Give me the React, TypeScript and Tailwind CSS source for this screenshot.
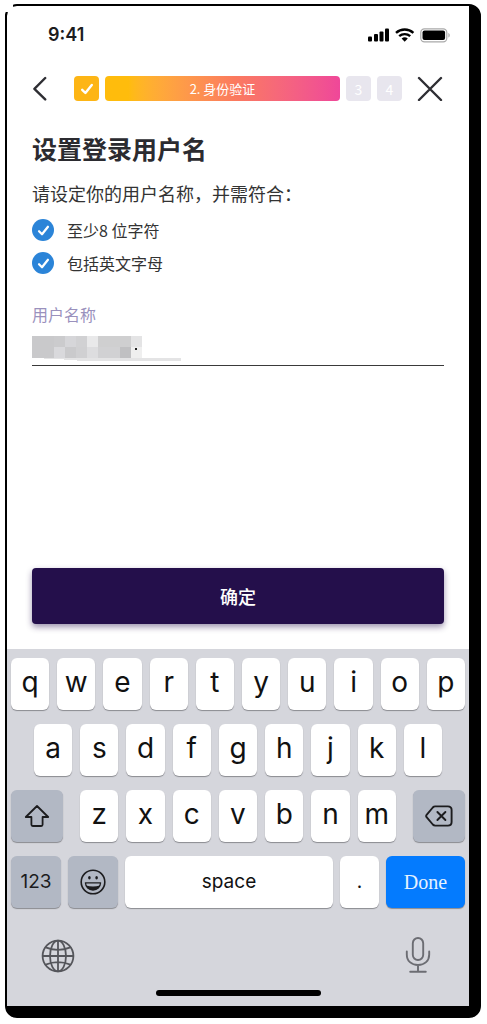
import type { ReactNode } from "react";

const KEY =
  "flex h-[52px] items-center justify-center rounded-md shadow-[0_1px_1px_#8a8b90]";
const LETTER = `${KEY} min-w-0 flex-1 bg-white pb-1 text-[28px] font-normal text-[#111]`;
const GREY = `${KEY} bg-[#b2b8c4] text-[#1c1c1e]`;

function Letters({ keys }: { keys: string }) {
  return (
    <>
      {keys.split("").map((k) => (
        <button key={k} type="button" className={LETTER}>
          {k}
        </button>
      ))}
    </>
  );
}

function Tick({ size }: { size: number }) {
  return (
    <svg width={size} height={size} viewBox="0 0 14 14" fill="none" aria-hidden="true">
      <path
        d="M2.2 7.8 5.4 11 11.8 3"
        stroke="#fff"
        strokeWidth="2.4"
        strokeLinecap="round"
        strokeLinejoin="round"
      />
    </svg>
  );
}

function StatusBar() {
  return (
    <div className="flex h-6 items-center pr-[18px] pl-[41px]">
      <span className="flex-1 text-lg font-semibold text-[#1c1c1e]">9:41</span>
      <svg width="84" height="16" viewBox="0 0 84 16" aria-hidden="true">
        <g fill="#000">
          <rect x="1" y="9.5" width="4" height="5" rx="1" />
          <rect x="7" y="7" width="4" height="7.5" rx="1" />
          <rect x="12.5" y="4.5" width="4" height="10" rx="1" />
          <rect x="18" y="1.5" width="4" height="13" rx="1" />
        </g>
        <g fill="none" stroke="#000" strokeWidth="2.4">
          <path d="M29 5.8a13 13 0 0 1 17.4 0" />
          <path d="M32.2 9.2a8.2 8.2 0 0 1 11 0" />
        </g>
        <path d="M34.6 11.6a4.6 4.6 0 0 1 6.2 0L37.7 14.8Z" fill="#000" />
        <rect x="53.8" y="1.8" width="26" height="13" rx="3.6" fill="none" stroke="#a9a9a9" strokeWidth="1.2" />
        <rect x="55.5" y="3.5" width="22.6" height="9.6" rx="2" fill="#000" />
        <path d="M81.4 6v4.6c1.8-.7 1.8-3.9 0-4.6Z" fill="#a9a9a9" />
      </svg>
    </div>
  );
}

function Step({ children }: { children: ReactNode }) {
  return (
    <li className="flex h-[25px] w-[25px] items-center justify-center rounded bg-[#e8e6ee] text-sm text-white">
      {children}
    </li>
  );
}

function StepBar() {
  return (
    <nav aria-label="步骤" className="mt-[29px] flex h-[25px] items-center gap-1.5">
      <button type="button" aria-label="返回" className="flex h-[25px] w-9 items-center">
        <svg width="16" height="25" viewBox="0 0 16 25" fill="none" aria-hidden="true">
          <path d="M13.2 2 2.4 12.8 13.2 23.4" stroke="#2e2e33" strokeWidth="2.4" strokeLinecap="round" strokeLinejoin="round" />
        </svg>
      </button>
      <ol className="flex flex-1 items-center gap-1.5">
        <li aria-label="1" className="flex h-[25px] w-[25px] items-center justify-center rounded bg-[#fdb515]">
          <Tick size={14} />
        </li>
        <li
          aria-current="step"
          className="flex h-[25px] flex-1 items-center justify-center rounded bg-linear-to-r from-[#ffbc0c] from-10% via-[#fb7a5e] via-55% to-[#ef4799] text-[13px] text-white"
        >
          2. 身份验证
        </li>
        <Step>3</Step>
        <Step>4</Step>
      </ol>
      <button type="button" aria-label="关闭" className="flex h-[25px] w-9 items-center justify-end">
        <svg width="28" height="25" viewBox="0 0 28 25" fill="none" aria-hidden="true">
          <path d="M3 2 25 24M25 2 3 24" stroke="#2e2e33" strokeWidth="2.4" strokeLinecap="round" />
        </svg>
      </button>
    </nav>
  );
}

function Rule({ children }: { children: ReactNode }) {
  return (
    <li className="flex h-[22px] items-center gap-[13px] text-base text-[#333]">
      <span className="flex h-[22px] w-[22px] items-center justify-center rounded-full bg-[#2b84d8]">
        <Tick size={13} />
      </span>
      {children}
    </li>
  );
}

const MOSAIC_TOP = ["#c9c9cb", "#c9c9cb", "#cbcbcd", "#d6d6d9", "#d1d1d3", "#e9e9ea", "#cfcfd0", "#cfcfd0", "#cfcfd0", "#e4e4e5"];
const MOSAIC_BOTTOM = ["#c9c9cb", "#c9c9cb", "#d9d9dc", "#cacacc", "#d0d0d2", "#dddddf", "#d1d1d3", "#d1d1d3", "#c0c0c2", "#efefef"];

function NameField() {
  return (
    <div className="mt-7">
      <label htmlFor="username" className="block text-base leading-6 text-[#9a91bd]">
        用户名称
      </label>
      <div className="relative">
        <input
          id="username"
          type="text"
          className="block h-10 w-full rounded-none border-b border-[#3a3a3a] bg-transparent text-lg outline-none"
        />
        <svg
          className="pointer-events-none absolute top-2.5 left-0"
          width="150"
          height="26"
          viewBox="0 0 150 26"
          shapeRendering="crispEdges"
          aria-hidden="true"
        >
          {MOSAIC_TOP.map((c, i) => (
            <rect key={i} x={i * 11} y="0" width="11" height="11" fill={c} />
          ))}
          {MOSAIC_BOTTOM.map((c, i) => (
            <rect key={i} x={i * 11} y="11" width="11" height="11" fill={c} />
          ))}
          <path d="M12 22H149V25H45V24H32V23H12Z" fill="#e4e4e5" />
          <rect x="103" y="12" width="2" height="2" fill="#222" />
        </svg>
      </div>
    </div>
  );
}

function Keyboard() {
  return (
    <section aria-label="键盘" className="bg-[#d5d6dc] px-1 pt-[9px] pb-2.5">
      <div className="flex flex-col gap-3.5">
        <div className="flex gap-2">
          <Letters keys="qwertyuiop" />
        </div>
        <div className="flex gap-2 px-[23px]">
          <Letters keys="asdfghjkl" />
        </div>
        <div className="flex gap-[17px]">
          <button type="button" aria-label="shift" className={`${GREY} w-[52px]`}>
            <svg width="26" height="24" viewBox="0 0 26 24" fill="none" stroke="#1c1c1e" strokeWidth="1.8" strokeLinejoin="round" aria-hidden="true">
              <path d="M13 2 1.8 13H7.4V20.6Q7.4 22 8.8 22H17.2Q18.6 22 18.6 20.6V13H24.2Z" />
            </svg>
          </button>
          <div className="flex flex-1 gap-2">
            <Letters keys="zxcvbnm" />
          </div>
          <button type="button" aria-label="delete" className={`${GREY} w-[52px]`}>
            <svg width="28" height="22" viewBox="0 0 28 22" fill="none" stroke="#1c1c1e" strokeWidth="1.9" strokeLinejoin="round" strokeLinecap="round" aria-hidden="true">
              <path d="M10.2 1.4H22.8Q26.6 1.4 26.6 5V17Q26.6 20.6 22.8 20.6H10.2Q8.8 20.6 7.8 19.5L1.6 12.2Q.7 11 1.6 9.8L7.8 2.5Q8.8 1.4 10.2 1.4Z" />
              <path d="M12.4 7 20.4 15M20.4 7 12.4 15" />
            </svg>
          </button>
        </div>
        <div className="flex gap-[7px]">
          <button type="button" className={`${GREY} w-[50px] text-[19px]`}>
            123
          </button>
          <button type="button" aria-label="emoji" className={`${GREY} w-[50px]`}>
            <svg width="26" height="26" viewBox="0 0 26 26" fill="none" aria-hidden="true">
              <circle cx="13" cy="13" r="11.8" stroke="#1c1c1e" strokeWidth="1.6" />
              <ellipse cx="9.4" cy="8.8" rx="1.3" ry="1.7" fill="#1c1c1e" />
              <ellipse cx="16.6" cy="8.8" rx="1.3" ry="1.7" fill="#1c1c1e" />
              <path
                d="M5.4 13.8H20.6C20.4 18.2 17 21 13 21S5.6 18.2 5.4 13.8Z"
                stroke="#1c1c1e"
                strokeWidth="1.3"
                strokeLinejoin="round"
              />
              <path d="M6 16.4Q13 18.4 20 16.4C19 19.4 16.4 21 13 21S7 19.4 6 16.4Z" fill="#1c1c1e" />
            </svg>
          </button>
          <button type="button" className={`${KEY} flex-1 bg-white text-[19px] text-[#111]`}>
            space
          </button>
          <button type="button" className={`${KEY} w-[39px] bg-white text-[19px] text-[#111]`}>
            .
          </button>
          <button
            type="button"
            className={`${KEY} w-[79px] bg-[#047bfe] font-['Liberation_Serif',serif] text-xl text-[#e6f2ff]`}
          >
            Done
          </button>
        </div>
      </div>
      <div className="mt-[29px] flex items-center justify-between pr-[34px] pl-[30px]">
        <button type="button" aria-label="语言">
          <svg width="34" height="36" viewBox="0 0 34 36" fill="none" stroke="#55565b" strokeWidth="1.8" aria-hidden="true">
            <circle cx="17" cy="19" r="15.4" />
            <ellipse cx="17" cy="19" rx="8" ry="15.4" />
            <path d="M17 3.6V34.4M1.6 19H32.4M4.6 10.4Q17 15.4 29.4 10.4M4.6 27.6Q17 22.6 29.4 27.6" />
          </svg>
        </button>
        <button type="button" aria-label="听写">
          <svg width="26" height="36" viewBox="0 0 26 36" fill="none" stroke="#6c6d73" strokeWidth="1.9" strokeLinecap="round" aria-hidden="true">
            <rect x="7.8" y="1" width="10.4" height="22" rx="5.2" />
            <path d="M1.8 14.4V17.4C1.8 24 6.4 28 13 28S24.2 24 24.2 17.4V14.4M13 28V34.8M5.2 34.8H20.8" />
          </svg>
        </button>
      </div>
      <div className="mx-auto mt-[17px] h-1.5 w-[165px] rounded-full bg-black" />
    </section>
  );
}

export default function App() {
  return (
    <div className="flex min-h-screen bg-white pt-1 pr-1.5 pb-1.5 pl-[5px] font-['Inter','Noto_Sans_CJK_SC',sans-serif]">
      <div className="relative flex flex-1 flex-col rounded-xl border-t-2 border-r-12 border-b-12 border-l-2 border-black bg-white">
        <div className="absolute -top-0.5 -left-0.5 h-2 w-2 bg-white" />
        <main className="flex flex-1 flex-col pt-[17px] pb-[25px]">
          <StatusBar />
          <div className="flex flex-1 flex-col px-[25px] font-['Noto_Sans_CJK_SC',sans-serif]">
            <StepBar />
            <h1 className="mt-[31px] text-[25px] leading-8 font-bold text-[#2b2b30]">设置登录用户名</h1>
            <p className="mt-[15px] text-lg leading-7 text-[#333]">请设定你的用户名称，并需符合：</p>
            <ul className="mt-3 flex flex-col gap-[11px]">
              <Rule>至少8 位字符</Rule>
              <Rule>包括英文字母</Rule>
            </ul>
            <NameField />
            <button
              type="button"
              className="mt-auto h-14 w-full rounded bg-[#240f4b] text-lg font-medium text-white shadow-[0_3px_6px_rgba(36,15,75,0.45)]"
            >
              确定
            </button>
          </div>
        </main>
        <Keyboard />
      </div>
    </div>
  );
}
